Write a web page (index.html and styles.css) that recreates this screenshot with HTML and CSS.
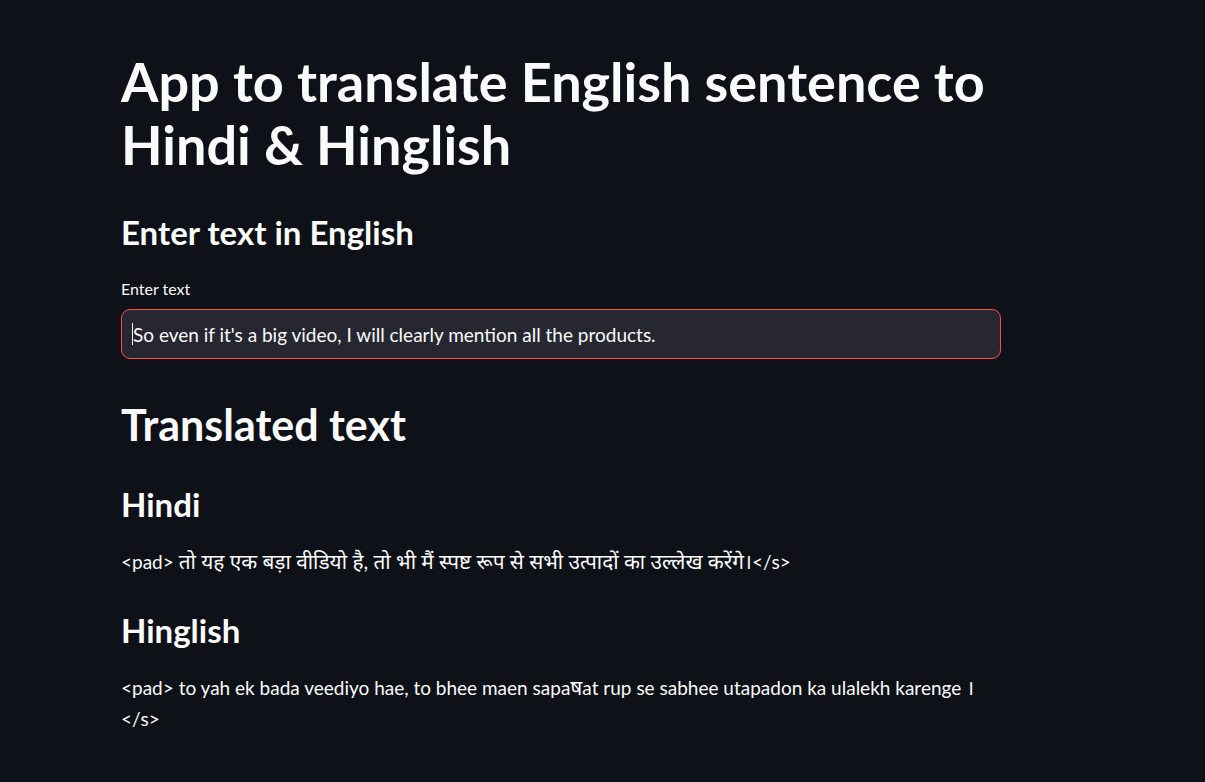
FILE: index.html
```html
<!DOCTYPE html>
<html lang="en">
<head>
<meta charset="utf-8">
<title>Translate</title>
<link rel="stylesheet" href="styles.css">
</head>
<body>
<main class="main">
  <div class="block">
    <h1 class="title">App to translate English sentence to Hindi &amp; Hinglish</h1>
    <h3 class="subheader first">Enter text in English</h3>
    <div class="field">
      <label class="label">Enter text</label>
      <div class="input"><span class="caret"></span>So even if it's a big video, I will clearly mention all the products.</div>
    </div>
    <h2 class="header">Translated text</h2>
    <h3 class="subheader">Hindi</h3>
    <p class="para">&lt;pad&gt; <span class="deva">तो यह एक बड़ा वीडियो है, तो भी मैं स्पष्ट रूप से सभी उत्पादों का उल्लेख करेंगे।</span>&lt;/s&gt;</p>
    <h3 class="subheader">Hinglish</h3>
    <p class="para">&lt;pad&gt; to yah ek bada veediyo hae, to bhee maen sapa<span class="deva">ष</span>at rup se sabhee utapadon ka ulalekh karenge <span class="deva">।</span> &lt;/s&gt;</p>
  </div>
</main>
</body>
</html>
```

FILE: styles.css
```css
html, body {
  margin: 0;
  padding: 0;
  background: #0e1117;
  color: #fafafa;
  font-family: "Lato", "Noto Sans Devanagari", "Noto Sans", sans-serif;
}

.main {
  padding: 50px 0 40px 121px;
}

.block {
  width: 880px;
}

.title {
  margin: 0;
  font-size: 54px;
  font-weight: 700;
  line-height: 63px;
}

.subheader {
  margin: 0;
  font-size: 33px;
  font-weight: 700;
  line-height: 40px;
}

.subheader.first {
  margin-top: 36px;
}

.field {
  margin-top: 27px;
}

.label {
  display: block;
  font-size: 16px;
  line-height: 20px;
  margin-bottom: 10px;
}

.input {
  box-sizing: border-box;
  height: 50px;
  background: #262730;
  border: 1px solid #ff4b4b;
  border-radius: 9px;
  padding: 0 10px;
  display: flex;
  align-items: center;
  font-size: 19px;
}

.caret {
  display: inline-block;
  width: 1px;
  height: 22px;
  background: #fafafa;
}

.header {
  margin: 40px 0 0;
  font-size: 43px;
  font-weight: 700;
  line-height: 52px;
}

.header + .subheader {
  margin-top: 33px;
}

.para {
  margin: 21px 0 33px;
  font-size: 19px;
  line-height: 31px;
}

.deva {
  font-size: 20.8px;
}
```
